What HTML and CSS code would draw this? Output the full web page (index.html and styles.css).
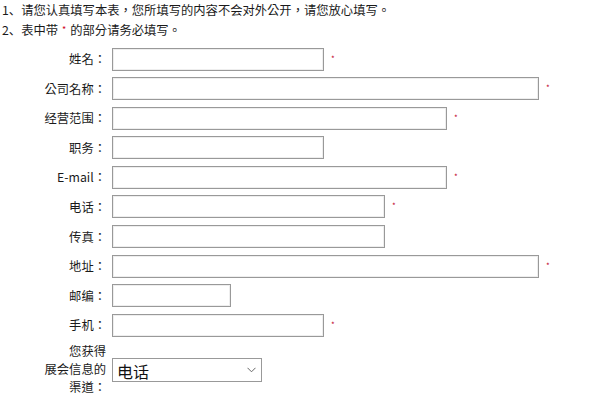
FILE: index.html
```
<!DOCTYPE html>
<html lang="zh-TW">
<head>
    <meta charset="UTF-8">
    <title>参展登记表</title>
    <link rel="stylesheet" href="styles.css">
</head>
<body>
    <div class="notes">
        <p><span lang="zh-CN">1、</span>请您认真填写本表，您所填写的内容不会对外公开，请您放心填写。</p>
        <p><span lang="zh-CN">2、</span>表中带<span class="req-inline">*</span>的部分请务必填写。</p>
    </div>

    <form class="reg-form">
        <label class="lbl">姓名：</label>
        <div class="field"><input type="text" class="w-s"><span class="req">*</span></div>

        <label class="lbl">公司名称：</label>
        <div class="field"><input type="text" class="w-xl"><span class="req">*</span></div>

        <label class="lbl">经营范围：</label>
        <div class="field"><input type="text" class="w-l"><span class="req">*</span></div>

        <label class="lbl">职务：</label>
        <div class="field"><input type="text" class="w-s"></div>

        <label class="lbl">E-mail：</label>
        <div class="field"><input type="text" class="w-l"><span class="req">*</span></div>

        <label class="lbl">电话：</label>
        <div class="field"><input type="text" class="w-m"><span class="req">*</span></div>

        <label class="lbl">传真：</label>
        <div class="field"><input type="text" class="w-m"></div>

        <label class="lbl">地址：</label>
        <div class="field"><input type="text" class="w-xl"><span class="req">*</span></div>

        <label class="lbl">邮编：</label>
        <div class="field"><input type="text" class="w-xs"></div>

        <label class="lbl">手机：</label>
        <div class="field"><input type="text" class="w-s"><span class="req">*</span></div>

        <label class="lbl lbl-multi">您获得<br>展会信息的<br>渠道：</label>
        <div class="field">
            <div class="select-wrap">
                <select>
                    <option>电话</option>
                    <option>邮件</option>
                    <option>网络</option>
                </select>
                <svg class="chevron" width="9" height="6" viewBox="0 0 9 6"><path d="M0.5 0.8 L4.5 4.8 L8.5 0.8" fill="none" stroke="#666" stroke-width="1"/></svg>
            </div>
        </div>
    </form>
</body>
</html>
```

FILE: styles.css
```
* {
    margin: 0;
    padding: 0;
    box-sizing: border-box;
}

body {
    font-family: "Noto Sans CJK TC", "Noto Sans", sans-serif;
    font-size: 12.3px;
    color: #1a1a1a;
    background: #fff;
    padding: 0 2px;
}

.notes p {
    line-height: 20px;
}

.req-inline {
    color: #d0021b;
    font-size: 9px;
    padding: 0 4px;
    position: relative;
    top: -2px;
}

.reg-form {
    display: grid;
    grid-template-columns: 64px 1fr;
    column-gap: 6px;
    row-gap: 6.6px;
    align-items: center;
    margin-top: 5.5px;
    margin-left: 40px;
}

.lbl {
    text-align: right;
    white-space: nowrap;
}

.lbl-multi {
    white-space: normal;
    line-height: 18px;
    margin-top: -1px;
}

.field {
    display: flex;
    align-items: center;
}

.field input {
    height: 23px;
    border: 1px solid #999;
    box-shadow: inset 0 0 0 1px #eee;
    background: #fff;
    font-size: 13px;
}

.w-xs { width: 119px; }
.w-s { width: 212px; }
.w-m { width: 273px; }
.w-l { width: 335px; }
.w-xl { width: 427px; }

.req {
    color: #c0002a;
    font-size: 8px;
    margin-left: 7px;
    position: relative;
    top: -1px;
}

.select-wrap {
    position: relative;
    width: 150px;
    height: 24px;
}

.select-wrap select {
    appearance: none;
    -webkit-appearance: none;
    width: 100%;
    height: 100%;
    border: 1px solid #999;
    background: #fff;
    font-family: "Noto Sans CJK SC", sans-serif;
    font-size: 16px;
    color: #111;
    padding: 0 0 0 4px;
    border-radius: 0;
}

.chevron {
    position: absolute;
    right: 6px;
    top: 9px;
    pointer-events: none;
}
```
